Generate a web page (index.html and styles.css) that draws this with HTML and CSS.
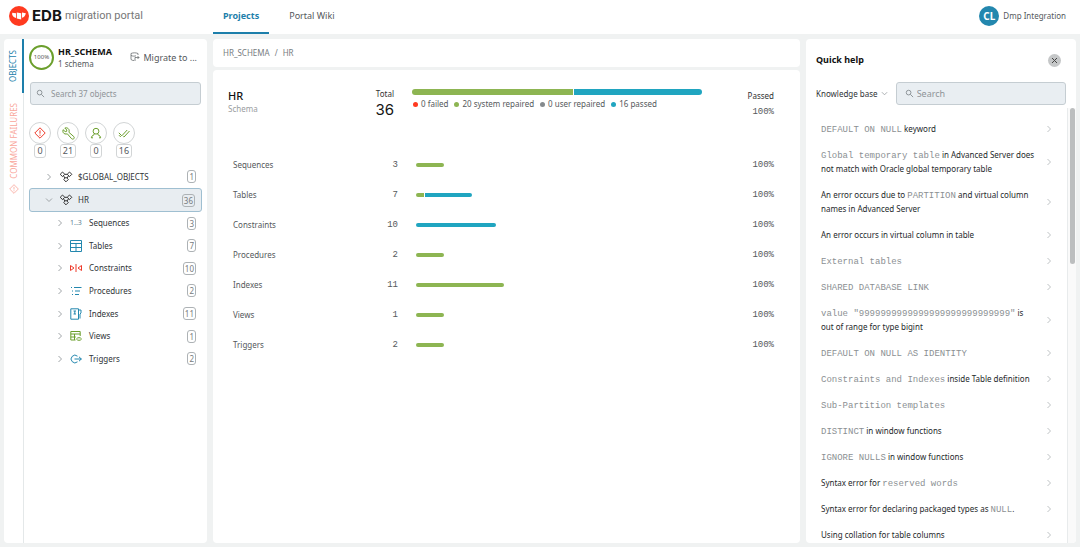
FILE: index.html
```html
<!DOCTYPE html>
<html lang="en">
<head>
<meta charset="utf-8">
<title>EDB migration portal</title>
<meta name="viewport" content="width=device-width, initial-scale=1">
<link rel="stylesheet" href="styles.css">
</head>
<body>
<svg class="defs" aria-hidden="true">
  <symbol id="chev-right" viewBox="0 0 8 8"><path d="M2.5 1 5.5 4 2.5 7"/></symbol>
  <symbol id="chev-down" viewBox="0 0 8 8"><path d="M1 2.5 4 5.5 7 2.5"/></symbol>
  <symbol id="search" viewBox="0 0 10 10"><circle cx="4" cy="4" r="2.6"/><path d="M6 6 9 9"/></symbol>
  <symbol id="schema" viewBox="0 0 14 12"><path d="M3.5 1 5.800 3.300 3.500 5.600 1.200 3.300ZM10.500 1 12.800 3.300 10.500 5.600 8.200 3.300ZM7 6.200 9.300 8.500 7 10.800 4.700 8.500ZM5.800 3.300h2.400M4.500 4.700 6 7.200M9.500 4.700 8 7.200"/></symbol>
  <symbol id="warn" viewBox="0 0 12 12"><path d="M6 .8 11.200 6 6 11.200.8 6ZM6 3.400V6.600M6 7.600V8.800"/></symbol>
</svg>
<header class="topbar">
  <a class="brand" href="#">
    <svg class="brand-mark" viewBox="0 0 20 20" aria-hidden="true"><circle cx="10" cy="10" r="10" fill="#ff3a20"/><g fill="#fff"><path d="M3.200 6.800 7 7.200v4.800C5.300 11.600 4 10.600 3.200 8.800Z"/><path d="M7.800 6.600 12.200 7.200V13.600L7.800 12.600Z"/><path d="M13 6.600 16.800 7.200C16.600 9.400 15 11.200 13 11.800Z"/></g></svg>
    <span class="brand-edb">EDB</span><span class="brand-name">migration portal</span>
  </a>
  <nav class="tabs">
    <a class="tab tab-active" href="#">Projects</a>
    <a class="tab" href="#">Portal Wiki</a>
  </nav>
  <div class="user"><span class="avatar">CL</span><span>Dmp Integration</span></div>
</header>

<div class="workspace">
  <aside class="panel sidebar">
    <div class="rail">
      <button class="rail-tab rail-active"><span class="rail-text">OBJECTS</span></button>
      <button class="rail-tab rail-fail"><span class="rail-text">COMMON FAILURES</span><svg class="line rail-icon" aria-hidden="true"><use href="#warn"/></svg></button>
    </div>
    <div class="objects">
      <div class="project">
        <span class="ring">100%</span>
        <div class="project-text"><strong class="project-name">HR_SCHEMA</strong><span>1 schema</span></div>
        <button class="migrate"><svg class="line thin" width="10" height="10" viewBox="0 0 10 10" aria-hidden="true"><path d="M8 3V1.500C6 .6 3 .6 1 1.500v6C2 8.300 3 8.600 4 8.500M1 3.500c2 .8 3.500.8 5 .3M5 9V5.500H9M7.500 4 9 5.500 7.500 7"/></svg>Migrate to ...</button>
      </div>
      <label class="search search-objects"><svg class="line" width="9" height="9" aria-hidden="true"><use href="#search"/></svg><input type="search" placeholder="Search 37 objects" aria-label="Search objects"></label>
      <div class="filters">
        <button class="filter" aria-label="Failed"><span class="filter-icon red"><svg class="line" width="12" height="12"><use href="#warn"/></svg></span><span class="filter-count">0</span></button>
        <button class="filter" aria-label="System repaired"><span class="filter-icon"><svg class="line" width="13" height="13" viewBox="0 0 13 13"><path d="M2.800 1 4.800 3 4.600 4.400 3.200 4.600 1.100 2.700C.5 4.800 1.200 6.300 2.900 6.900 3.900 7.200 4.700 7 5.300 6.800L9.600 11.700C11.200 13 13.100 11.100 11.800 9.600L6.900 5.300C7.500 3.700 7.200 2.400 6.100 1.500 5.200.8 4 .6 2.800 1Z"/></svg></span><span class="filter-count">21</span></button>
        <button class="filter" aria-label="User repaired"><span class="filter-icon"><svg class="line" width="12" height="12" viewBox="0 0 12 12"><circle cx="6" cy="4.200" r="2.900"/><path d="M4.500 6.800C4.500 8.500 1.500 8 1.300 10.800H3M7.500 6.800C7.500 8.500 10.500 8 10.700 10.800H9"/></svg></span><span class="filter-count">0</span></button>
        <button class="filter" aria-label="Passed"><span class="filter-icon"><svg class="line" width="12" height="10" viewBox="0 0 12 10"><path d="M.8 4.800 3.800 7.800 9.200 2M5.300 8.600 6 9 11.500 3M1 7.200 2.800 9"/></svg></span><span class="filter-count">16</span></button>
      </div>
      <div class="tree">
        <button class="node root"><svg class="line chev"><use href="#chev-right"/></svg><svg class="line schema-icon"><use href="#schema"/></svg><span class="node-name">$GLOBAL_OBJECTS</span><span class="badge">1</span></button>
        <button class="node root selected"><svg class="line chev"><use href="#chev-down"/></svg><svg class="line schema-icon"><use href="#schema"/></svg><span class="node-name">HR</span><span class="badge">36</span></button>
        <div class="children">
          <button class="node"><svg class="line chev"><use href="#chev-right"/></svg><span class="kind num">1..3</span><span class="node-name">Sequences</span><span class="badge">3</span></button>
          <button class="node"><svg class="line chev"><use href="#chev-right"/></svg><svg class="line kind" viewBox="0 0 12 12"><path d="M.5.5h11v11H.5ZM.5 3.500h11M.5 7.500h11M6 3.500v8"/></svg><span class="node-name">Tables</span><span class="badge">7</span></button>
          <button class="node"><svg class="line chev"><use href="#chev-right"/></svg><svg class="line kind red" viewBox="0 0 12 12"><path d="M.5 3.500 4 6 .5 8.500ZM11.500 3.500 8 6 11.500 8.500ZM6 2v8"/></svg><span class="node-name">Constraints</span><span class="badge">10</span></button>
          <button class="node"><svg class="line chev"><use href="#chev-right"/></svg><svg class="line kind" viewBox="0 0 12 12"><path d="M4 2.500h7.500M5 6h5M5 9.500h4M1 2.500h1M2 6h1M2 9.500h1"/></svg><span class="node-name">Procedures</span><span class="badge">2</span></button>
          <button class="node"><svg class="line chev"><use href="#chev-right"/></svg><svg class="line kind" viewBox="0 0 12 12"><path d="M.8.8h7.700v10.400H.8ZM3.500 3h2.500M4.800 3v3M3.500 6h2.500M8.500 2h2.500v3l-1 1v4.500"/></svg><span class="node-name">Indexes</span><span class="badge">11</span></button>
          <button class="node"><svg class="line chev"><use href="#chev-right"/></svg><svg class="line kind green" viewBox="0 0 12 12"><path d="M5.500 10H.8V1.500h9.400V6M.8 4h9.400M.8 7h5M4.500 4v6M6.500 9C7.500 7.200 10.500 7.200 11.500 9 10.500 10.800 7.500 10.800 6.500 9Z"/></svg><span class="node-name">Views</span><span class="badge">1</span></button>
          <button class="node"><svg class="line chev"><use href="#chev-right"/></svg><svg class="line kind" viewBox="0 0 12 12"><path d="M7.500 3.200A3.800 3.800 0 1 0 7.500 8.800M4.500 6h7M9 3.800 11.300 6 9 8.200"/></svg><span class="node-name">Triggers</span><span class="badge">2</span></button>
        </div>
      </div>
    </div>
  </aside>

  <main class="content">
    <nav class="panel crumbs"><span>HR_SCHEMA</span><span>/</span><span>HR</span></nav>
    <section class="panel report">
      <div class="summary">
        <div><h1 class="title">HR</h1><div class="subtitle">Schema</div></div>
        <div class="total"><div class="head">Total</div><div class="total-value">36</div></div>
        <div class="overall">
          <div class="bar bar-large"><span class="seg repaired" style="flex-grow:20"></span><span class="seg passed" style="flex-grow:16"></span></div>
          <ul class="legend"><li class="key key-failed">0 failed</li><li class="key key-system">20 system repaired</li><li class="key key-user">0 user repaired</li><li class="key key-passed">16 passed</li></ul>
        </div>
        <div class="pass"><div class="head">Passed</div><div class="mono pass-value">100%</div></div>
      </div>
      <table class="types">
        <tr><th>Sequences</th><td class="count">3</td><td class="meter"><div class="bar" style="width:28px"><span class="seg repaired"></span></div></td><td class="percent">100%</td></tr>
        <tr><th>Tables</th><td class="count">7</td><td class="meter"><div class="bar" style="width:56px"><span class="seg repaired" style="flex-grow:1"></span><span class="seg passed" style="flex-grow:6"></span></div></td><td class="percent">100%</td></tr>
        <tr><th>Constraints</th><td class="count">10</td><td class="meter"><div class="bar" style="width:80px"><span class="seg passed"></span></div></td><td class="percent">100%</td></tr>
        <tr><th>Procedures</th><td class="count">2</td><td class="meter"><div class="bar" style="width:28px"><span class="seg repaired"></span></div></td><td class="percent">100%</td></tr>
        <tr><th>Indexes</th><td class="count">11</td><td class="meter"><div class="bar" style="width:88px"><span class="seg repaired"></span></div></td><td class="percent">100%</td></tr>
        <tr><th>Views</th><td class="count">1</td><td class="meter"><div class="bar" style="width:28px"><span class="seg repaired"></span></div></td><td class="percent">100%</td></tr>
        <tr><th>Triggers</th><td class="count">2</td><td class="meter"><div class="bar" style="width:28px"><span class="seg repaired"></span></div></td><td class="percent">100%</td></tr>
      </table>
    </section>
  </main>

  <aside class="panel help">
    <div class="help-head"><h2 class="help-title">Quick help</h2><button class="close" aria-label="Close"><svg class="line" width="7" height="7" viewBox="0 0 7 7"><path d="M1 1 6 6M6 1 1 6"/></svg></button></div>
    <div class="help-tools">
      <button class="base">Knowledge base<svg class="line" width="7" height="7"><use href="#chev-down"/></svg></button>
      <label class="search search-help"><svg class="line" width="9" height="9" aria-hidden="true"><use href="#search"/></svg><input type="search" placeholder="Search" aria-label="Search help"></label>
    </div>
    <div class="help-body">
      <ul class="topics">
        <li><a class="topic" href="#"><span><code>DEFAULT ON NULL</code> keyword</span><svg class="line go"><use href="#chev-right"/></svg></a></li>
        <li><a class="topic" href="#"><span><code>Global temporary table</code> in Advanced Server does<br>not match with Oracle global temporary table</span><svg class="line go"><use href="#chev-right"/></svg></a></li>
        <li><a class="topic" href="#"><span>An error occurs due to <code>PARTITION</code> and virtual column<br>names in Advanced Server</span><svg class="line go"><use href="#chev-right"/></svg></a></li>
        <li><a class="topic" href="#"><span>An error occurs in virtual column in table</span><svg class="line go"><use href="#chev-right"/></svg></a></li>
        <li><a class="topic" href="#"><span><code>External tables</code></span><svg class="line go"><use href="#chev-right"/></svg></a></li>
        <li><a class="topic" href="#"><span><code>SHARED DATABASE LINK</code></span><svg class="line go"><use href="#chev-right"/></svg></a></li>
        <li><a class="topic" href="#"><span><code>value "9999999999999999999999999999"</code> is<br>out of range for type bigint</span><svg class="line go"><use href="#chev-right"/></svg></a></li>
        <li><a class="topic" href="#"><span><code>DEFAULT ON NULL AS IDENTITY</code></span><svg class="line go"><use href="#chev-right"/></svg></a></li>
        <li><a class="topic" href="#"><span><code>Constraints and Indexes</code> inside Table definition</span><svg class="line go"><use href="#chev-right"/></svg></a></li>
        <li><a class="topic" href="#"><span><code>Sub-Partition templates</code></span><svg class="line go"><use href="#chev-right"/></svg></a></li>
        <li><a class="topic" href="#"><span><code>DISTINCT</code> in window functions</span><svg class="line go"><use href="#chev-right"/></svg></a></li>
        <li><a class="topic" href="#"><span><code>IGNORE NULLS</code> in window functions</span><svg class="line go"><use href="#chev-right"/></svg></a></li>
        <li><a class="topic" href="#"><span>Syntax error for <code>reserved words</code></span><svg class="line go"><use href="#chev-right"/></svg></a></li>
        <li><a class="topic" href="#"><span>Syntax error for declaring packaged types as <code>NULL</code>.</span><svg class="line go"><use href="#chev-right"/></svg></a></li>
        <li><a class="topic" href="#"><span>Using collation for table columns</span><svg class="line go"><use href="#chev-right"/></svg></a></li>
      </ul>
      <div class="track"><div class="thumb"></div></div>
    </div>
  </aside>
</div>
</body>
</html>
```
FILE: styles.css
```css
* { box-sizing: border-box; }
body {
  margin: 0;
  height: 100vh;
  display: flex;
  flex-direction: column;
  background: #f0f2f2;
  color: #55595c;
  font: 9px/14px "Noto Sans", sans-serif;
  overflow: hidden;
}
button { border: 0; padding: 0; background: none; font: inherit; color: inherit; cursor: pointer; }
a { color: inherit; text-decoration: none; }
ul { list-style: none; margin: 0; padding: 0; }
h1, h2 { margin: 0; font-weight: 500; }
.defs { display: none; }
.line { fill: none; stroke: currentColor; stroke-width: 1; flex: none; }
.thin { stroke-width: 0.7; }

.topbar { display: flex; height: 34px; flex: none; background: #fff; padding: 0 14px 0 9px; }
.brand { display: flex; align-items: center; width: 204px; padding-bottom: 3px; }
.brand-mark { width: 20px; height: 20px; margin-right: 3px; }
.brand-edb { color: #151515; font: 700 15px/20px Inter, sans-serif; margin-right: 3px; }
.brand-name { color: #777; font: 11px/20px Roboto, sans-serif; }
.tabs { display: flex; gap: 10px; }
.tab { padding: 9px 10px 0; border-bottom: 2px solid transparent; }
.tab-active { color: #1d7fab; font-weight: 700; border-color: #1d7fab; }
.user { display: flex; align-items: center; gap: 4px; margin-left: auto; font-size: 8px; padding-bottom: 2px; }
.avatar { width: 20px; height: 20px; border-radius: 50%; background: #2387ae; color: #fff; font-size: 10px; font-weight: 700; line-height: 20px; text-align: center; }

.workspace { flex: 1; min-height: 0; display: flex; gap: 6px; padding: 5px 4px 4px; }
.panel { background: #fff; border-radius: 4px; }
.sidebar { width: 203px; flex: none; display: flex; }
.rail { width: 20px; flex: none; border-right: 1px solid #e4e8e9; }
.rail-tab { display: flex; flex-direction: column; align-items: center; width: 20px; }
.rail-active { height: 54px; justify-content: center; color: #1d7fab; border-right: 2px solid #1d7fab; }
.rail-fail { margin-top: 10px; gap: 5px; color: #f9a79c; }
.rail-text { writing-mode: vertical-rl; transform: rotate(180deg); font-size: 8px; line-height: 14px; }
.rail-icon { width: 10px; height: 10px; }
.objects { flex: 1; min-width: 0; padding: 5px 5px 0; }
.project { display: flex; align-items: center; height: 26px; font-size: 8px; line-height: 11px; }
.ring { width: 25px; height: 25px; border: 2px solid #6b9f2c; border-radius: 50%; color: #555; font-size: 6px; line-height: 21px; text-align: center; margin-right: 4px; flex: none; }
.project-text { display: flex; flex-direction: column; }
.project-name { color: #111; font-size: 9px; line-height: 13px; }
.migrate { display: flex; align-items: center; gap: 3px; margin: 0 5px 0 auto; font-size: 9px; white-space: nowrap; }
.search { display: flex; align-items: center; gap: 6px; height: 23px; padding: 0 5px; background: #e9eef2; border: 1px solid #c5cdd2; border-radius: 3px; color: #858b90; }
.search input { flex: 1; min-width: 0; padding: 0; border: 0; outline: 0; background: none; color: inherit; font: inherit; font-size: 8px; }
.search input::placeholder { color: #8f9498; opacity: 1; }
.search-objects { margin: 12px 1px 0; }
.filters { display: flex; gap: 6px; margin-top: 17px; }
.filter { display: flex; flex-direction: column; align-items: center; width: 22px; }
.filter-icon { width: 22px; height: 22px; display: grid; place-items: center; border: 1px solid #d2d5d6; border-radius: 50%; color: #6b9f2c; }
.filter-count { min-width: 12px; height: 14px; padding: 0 2px; background: #fff; border: 1px solid #d2d5d6; border-radius: 3px; line-height: 12px; }
.tree { display: grid; margin-top: 7px; font-size: 8px; color: #2f3437; }
.node { display: flex; align-items: center; padding: 0 6px 0 27px; text-align: left; }
.root { height: 23px; padding-left: 16px; }
.selected { height: 24px; background: #e8edf1; border: 1px solid #9fbfd1; border-radius: 3px; padding: 0 6px 0 15px; }
.children { display: grid; grid-auto-rows: 1fr; height: 158px; }
.chev { width: 8px; height: 8px; margin-right: 6px; color: #a0a5a8; }
.schema-icon { width: 14px; height: 12px; margin-right: 5px; color: #333; }
.kind { width: 12px; height: 12px; margin-right: 7px; color: #2387ae; flex: none; }
.num { font-size: 7px; line-height: 12px; white-space: nowrap; color: #5d7f92; }
.green { color: #6b9f2c; }
.red { color: #ee3b2b; }
.badge { margin-left: auto; min-width: 8px; height: 13px; padding: 0 1px; border: 1px solid #adb2b5; border-radius: 3px; color: #777c80; line-height: 11px; text-align: center; }

.content { flex: 1; min-width: 0; display: flex; flex-direction: column; gap: 3px; }
.crumbs { display: flex; gap: 5px; height: 28px; padding: 0 10px; line-height: 28px; color: #777c80; font-size: 8px; }
.report { flex: 1; padding: 18px 26px 0 15px; }
.summary { display: grid; grid-template-columns: 1fr auto 290px 72px; }
.title { color: #111; font-size: 11px; line-height: 16px; }
.subtitle { font-size: 8px; line-height: 10px; color: #9a9da0; }
.total { text-align: right; margin-right: 18px; }
.head { color: #333; font-size: 8px; line-height: 12px; }
.total-value { color: #151515; font: 15px/20px Inter, sans-serif; }
.bar { display: flex; gap: 1px; height: 4px; border-radius: 2px; overflow: hidden; }
.bar-large { height: 6px; border-radius: 3px; margin-top: 1px; }
.seg { flex: 1 0 0; }
.repaired { background: #8db552; }
.passed { background: #20a5c0; }
.legend { display: flex; gap: 5px; margin-top: 2px; font-size: 8px; white-space: nowrap; }
.key { display: flex; align-items: center; gap: 3px; }
.key::before { content: ""; width: 5px; height: 5px; border-radius: 50%; margin-left: 1px; background: currentColor; }
.key-failed::before { background: #ff3a20; }
.key-system::before { background: #8db552; }
.key-user::before { background: #858a8d; }
.key-passed::before { background: #20a5c0; }
.pass { text-align: right; padding-top: 2px; }
.mono, .count, .percent, code { font-family: "Liberation Mono", monospace; font-size: 9px; }
.pass-value { line-height: 20px; }
.types { width: 100%; border-collapse: collapse; margin-top: 28px; font-size: 8px; table-layout: fixed; }
.types tr { height: 30px; }
.types th { width: 135px; padding: 0 0 0 5px; font-weight: 400; text-align: left; }
.types td { padding: 0; }
.types .count { width: 35px; text-align: right; }
.types .meter { padding-left: 18px; }
.types .percent { width: 60px; text-align: right; }

.help { width: 270px; flex: none; display: flex; flex-direction: column; overflow: hidden; }
.help-head { display: flex; align-items: center; justify-content: space-between; padding: 14px 15px 0 10px; }
.help-title { color: #111; font-size: 9px; font-weight: 700; }
.close { width: 13px; height: 13px; display: grid; place-items: center; background: #c5c7c8; border-radius: 50%; color: #444; }
.help-tools { display: flex; align-items: center; gap: 8px; padding: 15px 10px 0; }
.base { display: flex; align-items: center; gap: 3px; color: #2f3437; font-size: 8px; white-space: nowrap; }
.search-help { flex: 1; min-width: 0; gap: 3px; padding-left: 8px; }
.search-help input { font-size: 9px; }
.base .line { color: #a0a5a8; }
.help-body { flex: 1; min-height: 0; display: flex; margin-top: 3px; }
.topics { flex: 1; min-width: 0; padding: 8px 14px 0 15px; overflow: hidden; }
.topic { display: flex; align-items: center; justify-content: space-between; padding: 6px 0; color: #25292b; font-size: 8px; line-height: 14px; white-space: nowrap; }
code { color: #8b9093; line-height: 1; }
.go { width: 8px; height: 8px; color: #bfc3c5; }
.track { width: 9px; border-left: 1px solid #e8ebec; padding: 0 2px; background: #fafafa; }
.thumb { width: 5px; height: 156px; background: #bcbebf; border-radius: 3px; }
```
